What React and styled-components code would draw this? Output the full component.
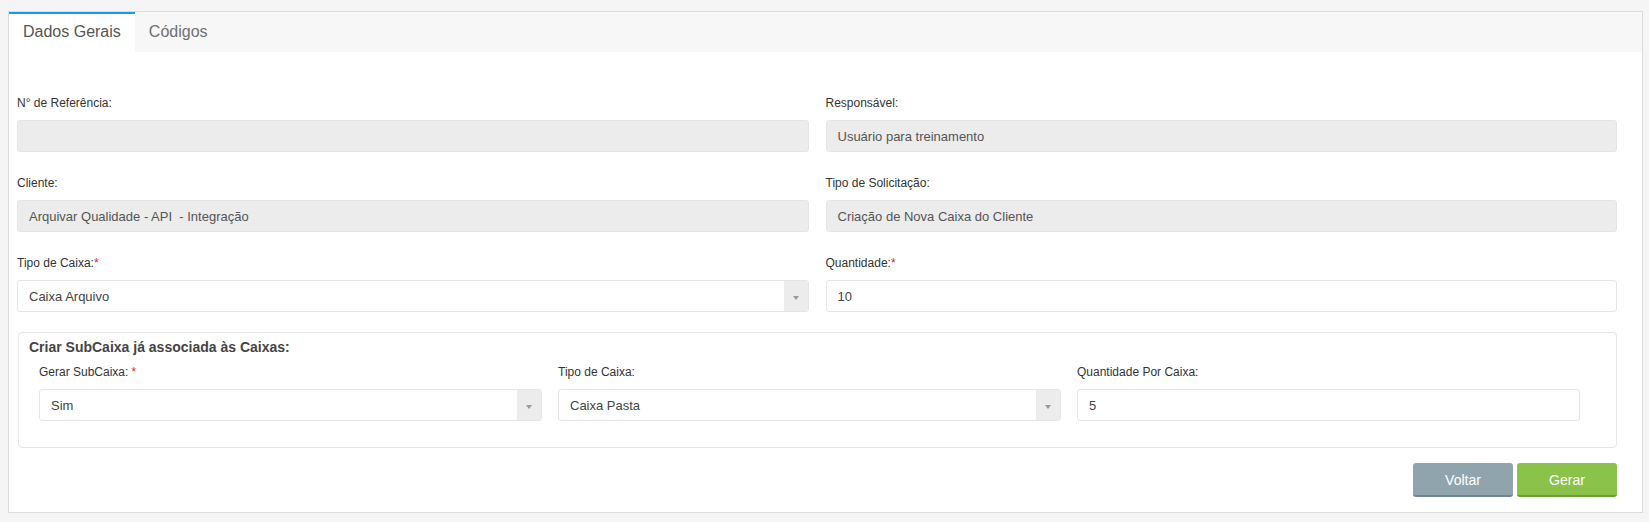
import React from "react";
import styled, { createGlobalStyle } from "styled-components";

const GlobalStyle = createGlobalStyle`
  html, body {
    margin: 0;
    padding: 0;
    background: #f5f5f5;
  }
  body {
    padding: 11px 6px 10px 8px;
    font-family: "Liberation Sans", Arial, sans-serif;
    color: #333;
  }
`;

const Panel = styled.div`
  background: #fff;
  border: 1px solid #dcdcdc;
`;

const TabBar = styled.div`
  display: flex;
  background: #f7f7f7;
  height: 40px;
`;

const Tab = styled.div`
  display: flex;
  align-items: center;
  padding: 0 14px;
  font-size: 16px;
  box-sizing: border-box;
  border-top: 2px solid ${(p) => (p.active ? "#1a9ae6" : "transparent")};
  background: ${(p) => (p.active ? "#fff" : "transparent")};
  color: ${(p) => (p.active ? "#555" : "#6f6f6f")};
  padding-bottom: 2px;
`;

const Content = styled.div`
  padding: 43px 25px 15px 8px;
`;

const Grid = styled.div`
  display: grid;
  grid-template-columns: 1fr 1fr;
  column-gap: 17px;
  row-gap: 23px;
`;

const Field = styled.div`
  display: flex;
  flex-direction: column;
`;

const Label = styled.label`
  font-size: 12px;
  line-height: 16px;
  color: #333;
  margin-bottom: 9px;
`;

const Req = styled.span`
  color: #e0262b;
  margin-left: ${(p) => (p.spaced ? "3px" : "0")};
`;

const Input = styled.div`
  height: 32px;
  box-sizing: border-box;
  display: flex;
  align-items: center;
  padding: 0 11px;
  font-size: 13px;
  color: ${(p) => (p.readOnly ? "#555" : "#444")};
  background: ${(p) => (p.readOnly ? "#ececec" : "#fff")};
  border: 1px solid #e3e6e9;
  border-radius: 3px;
`;

const SelectBox = styled.div`
  height: 32px;
  box-sizing: border-box;
  display: flex;
  align-items: stretch;
  font-size: 13px;
  color: #444;
  background: #fff;
  border: 1px solid #e3e6e9;
  border-radius: 3px;
  overflow: hidden;
`;

const SelectValue = styled.div`
  flex: 1;
  display: flex;
  align-items: center;
  padding: 0 11px;
`;

const Arrow = styled.div`
  width: 24px;
  background: #ececec;
  display: flex;
  align-items: center;
  justify-content: center;
  &::after {
    content: "";
    border-left: 3px solid transparent;
    border-right: 3px solid transparent;
    border-top: 4px solid #999;
    margin-top: 3px;
  }
`;

const SubBox = styled.fieldset`
  margin: 20px 0 0 1px;
  border: 1px solid #e6e6e6;
  border-radius: 4px;
  padding: 6px 36px 26px 20px;
`;

const SubTitle = styled.div`
  font-size: 14px;
  font-weight: bold;
  color: #444;
  line-height: 17px;
  margin: 0 0 8px -10px;
`;

const SubGrid = styled.div`
  display: grid;
  grid-template-columns: repeat(3, 1fr);
  column-gap: 16px;
`;

const Actions = styled.div`
  display: flex;
  justify-content: flex-end;
  gap: 4px;
  margin-top: 15px;
`;

const Button = styled.button`
  width: 100px;
  height: 34px;
  border: 0;
  border-bottom: 2px solid ${(p) => (p.variant === "green" ? "#6a9f32" : "#6f8792")};
  border-radius: 3px;
  background: ${(p) => (p.variant === "green" ? "#8bc34a" : "#90a4ae")};
  color: #fff;
  font-family: "Liberation Sans", Arial, sans-serif;
  font-size: 14px;
  padding: 2px 0 0;
`;

function Select({ value }) {
  return (
    <SelectBox>
      <SelectValue>{value}</SelectValue>
      <Arrow />
    </SelectBox>
  );
}

export default function App() {
  return (
    <>
      <GlobalStyle />
      <Panel>
        <TabBar>
          <Tab active>Dados Gerais</Tab>
          <Tab>Códigos</Tab>
        </TabBar>
        <Content>
          <Grid>
            <Field>
              <Label>N° de Referência:</Label>
              <Input readOnly />
            </Field>
            <Field>
              <Label>Responsável:</Label>
              <Input readOnly>Usuário para treinamento</Input>
            </Field>
            <Field>
              <Label>Cliente:</Label>
              <Input readOnly>Arquivar Qualidade - API&nbsp; - Integração</Input>
            </Field>
            <Field>
              <Label>Tipo de Solicitação:</Label>
              <Input readOnly>Criação de Nova Caixa do Cliente</Input>
            </Field>
            <Field>
              <Label>
                Tipo de Caixa:<Req>*</Req>
              </Label>
              <Select value="Caixa Arquivo" />
            </Field>
            <Field>
              <Label>
                Quantidade:<Req>*</Req>
              </Label>
              <Input>10</Input>
            </Field>
          </Grid>

          <SubBox>
            <SubTitle>Criar SubCaixa já associada às Caixas:</SubTitle>
            <SubGrid>
              <Field>
                <Label>
                  Gerar SubCaixa:<Req spaced>*</Req>
                </Label>
                <Select value="Sim" />
              </Field>
              <Field>
                <Label>Tipo de Caixa:</Label>
                <Select value="Caixa Pasta" />
              </Field>
              <Field>
                <Label>Quantidade Por Caixa:</Label>
                <Input>5</Input>
              </Field>
            </SubGrid>
          </SubBox>

          <Actions>
            <Button>Voltar</Button>
            <Button variant="green">Gerar</Button>
          </Actions>
        </Content>
      </Panel>
    </>
  );
}
